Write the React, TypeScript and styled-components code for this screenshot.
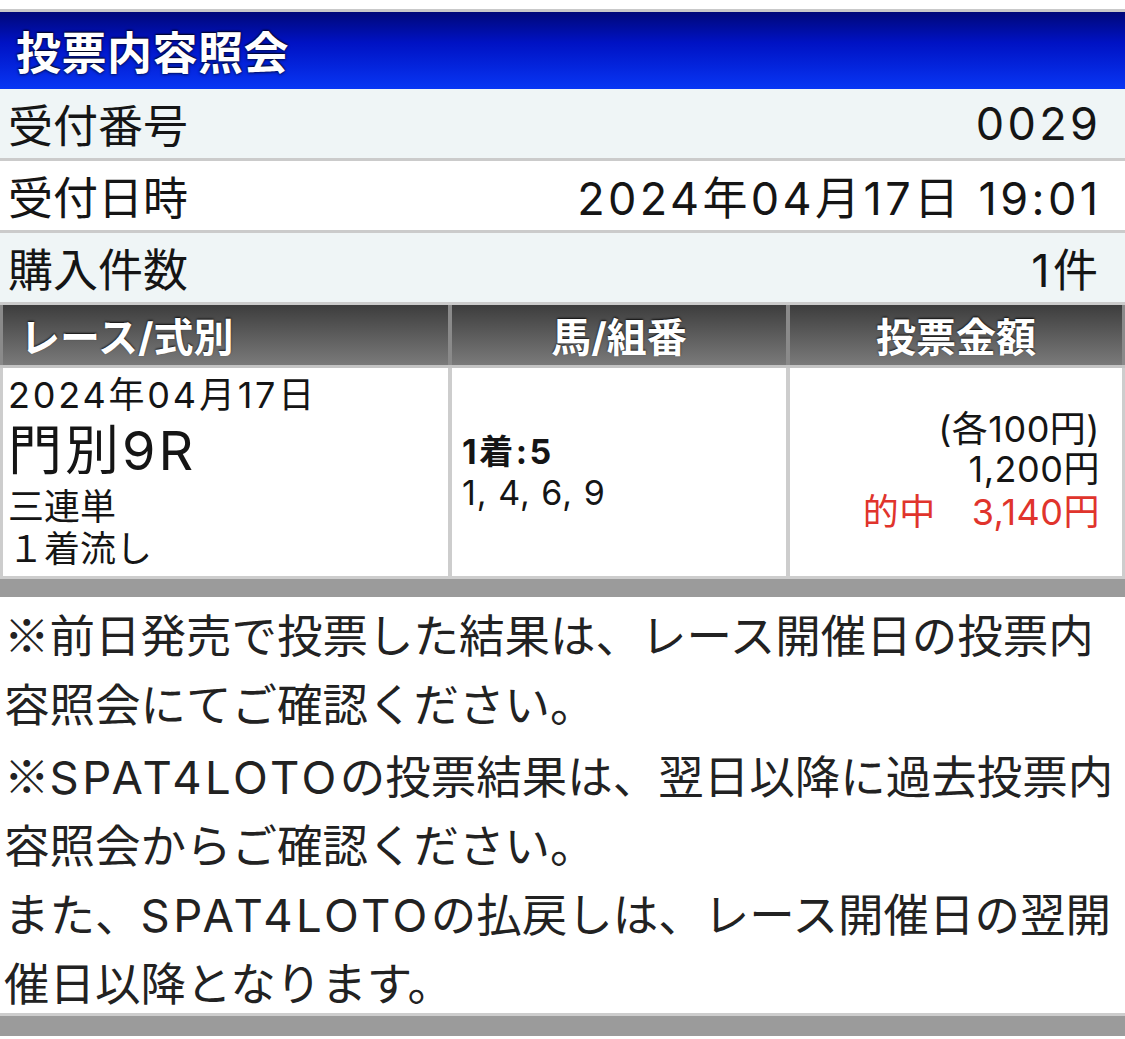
import styled, { createGlobalStyle } from 'styled-components';

const GlobalStyle = createGlobalStyle`
  html, body {
    margin: 0;
    padding: 0;
    background: #fff;
  }
  body {
    font-family: Inter, "Noto Sans CJK JP", sans-serif;
    color: #151515;
  }
`;

const Page = styled.div`
  width: 1125px;
  padding-top: 9px;
`;

const TitleBar = styled.h1`
  margin: 0;
  height: 77px;
  border-top: 3px solid #c9c9c9;
  background: linear-gradient(to bottom, #000878 0%, #0012c4 40%, #0836f4 100%);
  display: flex;
  align-items: center;
  padding-left: 16px;
  font-size: 45px;
  font-weight: 700;
  letter-spacing: 0.5px;
  color: #fff;
  text-shadow: 0 -1px 2px rgba(0, 0, 0, 0.9), 0 1px 3px rgba(0, 0, 0, 0.6);
`;

const InfoRow = styled.div<{ $alt?: boolean }>`
  height: 69px;
  border-bottom: 3px solid #cbcbcb;
  background: ${(p) => (p.$alt ? '#eff5f6' : '#fff')};
  display: flex;
  justify-content: space-between;
  align-items: center;
  padding: 0 27px 0 8px;
  font-size: 45px;
`;

const InfoValue = styled.span`
  letter-spacing: 3.4px;
  margin-right: -3.4px;
`;

const cols = '445px 334px 1fr';

const TableHead = styled.div`
  display: grid;
  grid-template-columns: ${cols};
  column-gap: 4px;
  padding: 0 3px;
  background: #8a8a8a;
  border-bottom: 3px solid #c4c4c4;
`;

const HeadCell = styled.div<{ $center?: boolean }>`
  height: 60px;
  display: flex;
  align-items: center;
  justify-content: ${(p) => (p.$center ? 'center' : 'flex-start')};
  padding-left: ${(p) => (p.$center ? '0' : '17px')};
  background: linear-gradient(to bottom, #3d3d3d 0%, #5c5c5c 50%, #7a7a7a 100%);
  color: #fff;
  font-size: 40px;
  font-weight: 700;
  text-shadow: 0 -1px 2px rgba(0, 0, 0, 0.85);
`;

const TableBody = styled.div`
  display: grid;
  grid-template-columns: ${cols};
  column-gap: 4px;
  padding: 0 3px 3px;
  background: #cdcdcd;
`;

const BodyCell = styled.div<{ $align?: 'left' | 'right' }>`
  height: 208px;
  box-sizing: border-box;
  background: #fff;
  display: flex;
  flex-direction: column;
  justify-content: ${(p) => (p.$align ? 'center' : 'flex-start')};
  align-items: ${(p) => (p.$align === 'right' ? 'flex-end' : 'flex-start')};
  padding: ${(p) => (p.$align === 'right' ? '0 22px 0 0' : p.$align ? '0 0 0 10px' : '7px 0 0 5px')};
`;

const Line = styled.div<{ $size: number; $lh: number; $bold?: boolean; $red?: boolean; $ls?: number }>`
  font-size: ${(p) => p.$size}px;
  line-height: ${(p) => p.$lh}px;
  font-weight: ${(p) => (p.$bold ? 700 : 400)};
  letter-spacing: ${(p) => p.$ls ?? 0}px;
  color: ${(p) => (p.$red ? '#e0342c' : '#151515')};
  white-space: nowrap;
`;

const Gap = styled.span`
  display: inline-block;
  width: 36px;
`;

const Band = styled.div<{ $line?: boolean }>`
  height: ${(p) => (p.$line ? '20px' : '18px')};
  background: #9b9b9b;
  border-top: ${(p) => (p.$line ? '3px solid #cdcdcd' : 'none')};
`;

const Notes = styled.div`
  padding: 2px 4px 0;
  height: 414px;
  font-size: 45.5px;
  line-height: 69px;
  color: #222;
  white-space: nowrap;
`;

const Mark = styled.span`
  font-family: "Noto Sans CJK JP", sans-serif;
`;

const Latin = styled.span`
  letter-spacing: 3.5px;
`;

export default function App() {
  return (
    <Page>
      <GlobalStyle />
      <TitleBar>投票内容照会</TitleBar>
      <InfoRow $alt>
        <span>受付番号</span>
        <InfoValue>0029</InfoValue>
      </InfoRow>
      <InfoRow>
        <span>受付日時</span>
        <InfoValue>2024年04月17日 19:01</InfoValue>
      </InfoRow>
      <InfoRow $alt>
        <span>購入件数</span>
        <InfoValue>1件</InfoValue>
      </InfoRow>
      <TableHead>
        <HeadCell>レース/式別</HeadCell>
        <HeadCell $center>馬/組番</HeadCell>
        <HeadCell $center>投票金額</HeadCell>
      </TableHead>
      <TableBody>
        <BodyCell>
          <Line $size={36} $lh={40} $ls={2.8}>2024年04月17日</Line>
          <Line $size={54} $lh={72} $ls={3}>門別9R</Line>
          <Line $size={36} $lh={40}>三連単</Line>
          <Line $size={36} $lh={44}>１着流し</Line>
        </BodyCell>
        <BodyCell $align="left">
          <Line $size={34} $lh={41} $bold $ls={2.5}>1着:5</Line>
          <Line $size={34} $lh={41} $ls={1}>1, 4, 6, 9</Line>
        </BodyCell>
        <BodyCell $align="right">
          <Line $size={36} $lh={40} $ls={0.5}>(各100円)</Line>
          <Line $size={36} $lh={40} $ls={0.5}>1,200円</Line>
          <Line $size={36} $lh={46} $red $ls={0.5}>
            的中<Gap />3,140円
          </Line>
        </BodyCell>
      </TableBody>
      <Band />
      <Notes>
        <Mark>※</Mark>前日発売で投票した結果は、レース開催日の投票内
        <br />
        容照会にてご確認ください。
        <br />
        <Mark>※</Mark>
        <Latin>SPAT4LOTO</Latin>の投票結果は、翌日以降に過去投票内
        <br />
        容照会からご確認ください。
        <br />
        また、<Latin>SPAT4LOTO</Latin>の払戻しは、レース開催日の翌開
        <br />
        催日以降となります。
      </Notes>
      <Band $line />
    </Page>
  );
}
